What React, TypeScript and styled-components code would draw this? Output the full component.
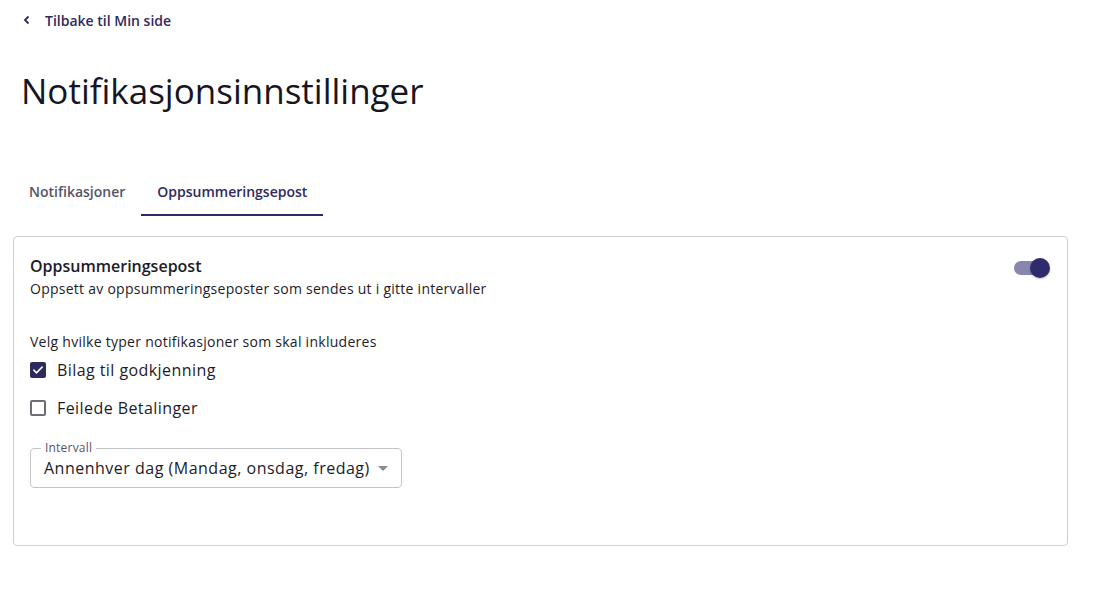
import React, { useState } from 'react';
import styled, { createGlobalStyle } from 'styled-components';

const GlobalStyle = createGlobalStyle`
  html, body {
    margin: 0;
    padding: 0;
    background: #ffffff;
    font-family: "Open Sans", Lato, sans-serif;
    color: #1c1b29;
  }
  * { box-sizing: border-box; }
`;

const Page = styled.div`
  padding: 8px 45px 0 13px;
`;

const BackLink = styled.a`
  display: inline-flex;
  align-items: center;
  gap: 14px;
  padding: 0 0 0 10px;
  height: 22px;
  color: #2e2a5e;
  font-size: 14px;
  font-weight: 600;
  text-decoration: none;
  cursor: pointer;
`;

const Title = styled.h1`
  margin: 38px 0 0 8px;
  font-size: 35px;
  font-weight: 400;
  line-height: 44px;
  color: #17161f;
`;

const TabBar = styled.div`
  display: flex;
  margin-top: 55px;
`;

const Tab = styled.button<{ $active?: boolean }>`
  border: 0;
  background: none;
  font-family: inherit;
  font-size: 14px;
  font-weight: 600;
  height: 48px;
  padding: 0 16px;
  color: ${(p) => (p.$active ? '#2e2a5e' : '#55546a')};
  border-bottom: 2px solid ${(p) => (p.$active ? '#2e2a5e' : 'transparent')};
  cursor: pointer;
`;

const Card = styled.section`
  margin-top: 20px;
  border: 1px solid #cfcfd4;
  border-radius: 4px;
  padding: 18px 17px 0 16px;
  height: 310px;
`;

const HeaderRow = styled.div`
  display: flex;
  justify-content: space-between;
  align-items: flex-start;
`;

const CardTitle = styled.h2`
  margin: 0;
  font-size: 16px;
  font-weight: 600;
  line-height: 22px;
`;

const CardSubtitle = styled.p`
  margin: 2px 0 0 0;
  font-size: 14px;
  line-height: 20px;
  letter-spacing: 0.26px;
`;

const SwitchTrack = styled.button<{ $on: boolean }>`
  position: relative;
  width: 34px;
  height: 14px;
  margin: 6px 2px 0 0;
  border: 0;
  padding: 0;
  border-radius: 7px;
  background: ${(p) => (p.$on ? '#8886ae' : '#b7b7bd')};
  cursor: pointer;
`;

const SwitchThumb = styled.span<{ $on: boolean }>`
  position: absolute;
  top: -3px;
  left: ${(p) => (p.$on ? '16px' : '-2px')};
  width: 20px;
  height: 20px;
  border-radius: 50%;
  background: ${(p) => (p.$on ? '#2f2b6c' : '#f4f4f4')};
  box-shadow: 0 1px 2px rgba(0, 0, 0, 0.25);
`;

const SectionLabel = styled.p`
  margin: 33px 0 0 0;
  font-size: 14px;
  line-height: 20px;
  letter-spacing: 0.27px;
`;

const CheckList = styled.div`
  display: flex;
  flex-direction: column;
  gap: 16px;
  margin-top: 7px;
`;

const CheckRow = styled.label`
  display: flex;
  align-items: center;
  gap: 11px;
  font-size: 16px;
  line-height: 22px;
  letter-spacing: 0.43px;
  cursor: pointer;
`;

const Box = styled.span<{ $checked: boolean }>`
  width: 16px;
  height: 16px;
  border-radius: 2px;
  display: inline-flex;
  align-items: center;
  justify-content: center;
  background: ${(p) => (p.$checked ? '#2e2a5e' : '#fff')};
  border: 2px solid ${(p) => (p.$checked ? '#2e2a5e' : '#6f6e78')};
`;

const SelectBox = styled.div`
  position: relative;
  margin-top: 29px;
  width: 372px;
  height: 40px;
  border: 1px solid #c4c4c8;
  border-radius: 4px;
  padding: 0 13px;
  display: flex;
  align-items: center;
  justify-content: space-between;
`;

const SelectLabel = styled.span`
  position: absolute;
  top: -8px;
  left: 10px;
  padding: 0 4px;
  background: #fff;
  font-size: 12px;
  line-height: 14px;
  letter-spacing: 0.2px;
  color: #55546a;
`;

const SelectValue = styled.span`
  font-size: 16px;
  letter-spacing: 0.5px;
`;

const Arrow = styled.span`
  width: 0;
  height: 0;
  border-left: 5px solid transparent;
  border-right: 5px solid transparent;
  border-top: 5px solid #8a8a92;
`;

const Check = () => (
  <svg width="12" height="12" viewBox="0 0 24 24" fill="none">
    <path d="M4 12.5l5 5L20 6.5" stroke="#fff" strokeWidth="3.2" strokeLinecap="square" />
  </svg>
);

const Chevron = () => (
  <svg width="8" height="10" viewBox="0 0 8 10" fill="none">
    <path d="M5.5 1.5L2 5l3.5 3.5" stroke="#2e2a5e" strokeWidth="1.8" />
  </svg>
);

export default function App() {
  const [tab, setTab] = useState(1);
  const [on, setOn] = useState(true);
  const [checks, setChecks] = useState([true, false]);
  const items = ['Bilag til godkjenning', 'Feilede Betalinger'];

  return (
    <Page>
      <GlobalStyle />
      <BackLink>
        <Chevron />
        Tilbake til Min side
      </BackLink>
      <Title>Notifikasjonsinnstillinger</Title>
      <TabBar>
        {['Notifikasjoner', 'Oppsummeringsepost'].map((t, i) => (
          <Tab key={t} $active={tab === i} onClick={() => setTab(i)}>
            {t}
          </Tab>
        ))}
      </TabBar>
      <Card>
        <HeaderRow>
          <div>
            <CardTitle>Oppsummeringsepost</CardTitle>
            <CardSubtitle>Oppsett av oppsummeringseposter som sendes ut i gitte intervaller</CardSubtitle>
          </div>
          <SwitchTrack $on={on} onClick={() => setOn(!on)}>
            <SwitchThumb $on={on} />
          </SwitchTrack>
        </HeaderRow>
        <SectionLabel>Velg hvilke typer notifikasjoner som skal inkluderes</SectionLabel>
        <CheckList>
          {items.map((label, i) => (
            <CheckRow key={label} onClick={() => setChecks(checks.map((c, j) => (j === i ? !c : c)))}>
              <Box $checked={checks[i]}>{checks[i] && <Check />}</Box>
              {label}
            </CheckRow>
          ))}
        </CheckList>
        <SelectBox>
          <SelectLabel>Intervall</SelectLabel>
          <SelectValue>Annenhver dag (Mandag, onsdag, fredag)</SelectValue>
          <Arrow />
        </SelectBox>
      </Card>
    </Page>
  );
}
